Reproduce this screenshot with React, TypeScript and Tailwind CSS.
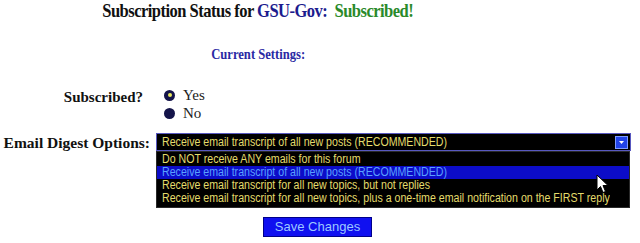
import React from "react";

function Cursor() {
  return (
    <svg width="14" height="20" viewBox="0 0 14 20" className="absolute left-[596px] top-[174px]">
      <path d="M1 1 L1 16 L4.5 12.5 L7 18.5 L9.5 17.5 L7 11.5 L12 11.5 Z" fill="#fff" stroke="#000" strokeWidth="1" strokeLinejoin="round" />
    </svg>
  );
}

export default function App() {
  const serif = { fontFamily: '"Liberation Serif", "Times New Roman", serif' };
  const sans = { fontFamily: '"Liberation Sans", Arial, sans-serif' };
  const opt = "origin-left scale-x-[0.885] whitespace-nowrap";
  return (
    <div className="relative w-[640px] h-[243px] bg-white overflow-hidden" style={serif}>
      <div className="flex flex-col items-center w-[516px]">
        <div className="text-[19px] font-bold leading-[22px] tracking-[-0.6px] scale-x-[0.87] whitespace-nowrap text-[#111]">
          Subscription Status for <span className="text-[#1c1c8e]">GSU-Gov:</span>
          &nbsp; <span className="text-[#2a8a2a]">Subscribed!</span>
        </div>
        <div className="mt-[24px] text-[14px] font-bold leading-[17px] text-[#2a2aa4] scale-x-[0.9] whitespace-nowrap">
          Current Settings:
        </div>
      </div>

      <div className="mt-[25px] grid grid-cols-[150px_1fr] gap-x-[6px]">
        <div className="text-right pr-[7px] text-[15px] font-bold leading-[16px] text-[#111] pt-[1px]">Subscribed?</div>
        <div className="flex flex-col pl-[8px] gap-[4px] text-[15px] leading-[14px] text-[#222]">
          <div className="flex items-center gap-[8px]">
            <span className="w-[11px] h-[11px] rounded-full bg-[#14144a] flex items-center justify-center">
              <span className="w-[4px] h-[4px] rounded-full bg-[#e8e860]" />
            </span>
            <span>Yes</span>
          </div>
          <div className="flex items-center gap-[8px]">
            <span className="w-[11px] h-[11px] rounded-full bg-[#14144a]" />
            <span>No</span>
          </div>
        </div>

        <div className="mt-[14px] text-right text-[15.5px] font-bold leading-[18px] text-[#111] whitespace-nowrap">
          Email Digest Options:
        </div>
        <div className="mt-[13px] w-[475px]" style={sans}>
          <div className="h-[18px] bg-black border border-[#5858c0] flex items-center justify-between pl-[5px] pr-[2px]">
            <span className={"text-[12px] leading-[14px] text-[#e4dc6c] " + opt}>
              Receive email transcript of all new posts (RECOMMENDED)
            </span>
            <span className="w-[13px] h-[13px] bg-[#2244e8] border border-[#7f9cff] flex items-center justify-center">
              <svg width="5" height="3" viewBox="0 0 5 3"><path d="M0 0 H5 L2.5 3 Z" fill="#fff" /></svg>
            </span>
          </div>
          <div className="bg-black border border-[#2a2a2a] pt-[1px] pb-[2px] text-[12px] leading-[13px] text-[#e4dc6c] w-[474px]">
            <div className="pl-[5px]"><div className={opt}>Do NOT receive ANY emails for this forum</div></div>
            <div className="pl-[5px] bg-[#0c0cc8] text-[#5aa0ff]"><div className={opt}>Receive email transcript of all new posts (RECOMMENDED)</div></div>
            <div className="pl-[5px]"><div className={opt}>Receive email transcript for all new topics, but not replies</div></div>
            <div className="pl-[5px]"><div className={opt}>Receive email transcript for all new topics, plus a one-time email notification on the FIRST reply</div></div>
          </div>
        </div>
      </div>

      <div className="flex justify-center mt-[9px]">
        <button className="w-[109px] h-[20px] bg-[#1010f0] border border-[#00008a] text-[#9cc8ff] text-[13px] leading-[18px] ml-[-5px]" style={sans}>
          Save Changes
        </button>
      </div>

      <Cursor />
    </div>
  );
}
